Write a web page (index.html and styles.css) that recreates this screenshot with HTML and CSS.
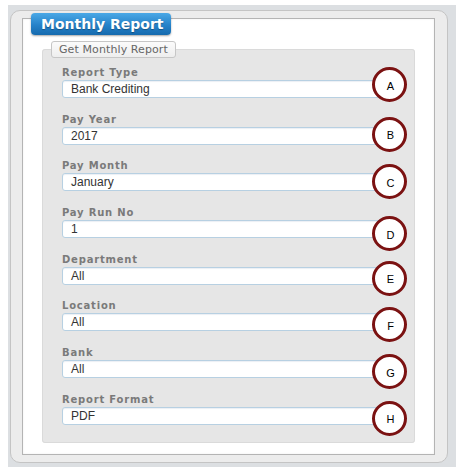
FILE: index.html
```html
<!DOCTYPE html>
<html>
<head>
<meta charset="utf-8">
<link rel="stylesheet" href="styles.css">
</head>
<body>
<div class="outer">
  <div class="frame">
    <div class="tab">Monthly Report</div>
    <div class="panel">
      <fieldset class="group">
        <legend class="legend">Get Monthly Report</legend>
        <div class="fields">
          <div class="row">
            <div class="label">Report Type</div>
            <div class="input">Bank Crediting</div>
            <div class="mark mk-a">A</div>
          </div>
          <div class="row">
            <div class="label">Pay Year</div>
            <div class="input">2017</div>
            <div class="mark mk-b">B</div>
          </div>
          <div class="row">
            <div class="label">Pay Month</div>
            <div class="input">January</div>
            <div class="mark mk-c">C</div>
          </div>
          <div class="row">
            <div class="label">Pay Run No</div>
            <div class="input">1</div>
            <div class="mark mk-d">D</div>
          </div>
          <div class="row">
            <div class="label">Department</div>
            <div class="input">All</div>
            <div class="mark mk-e">E</div>
          </div>
          <div class="row">
            <div class="label">Location</div>
            <div class="input">All</div>
            <div class="mark mk-e">F</div>
          </div>
          <div class="row">
            <div class="label">Bank</div>
            <div class="input">All</div>
            <div class="mark mk-e">G</div>
          </div>
          <div class="row">
            <div class="label">Report Format</div>
            <div class="input">PDF</div>
            <div class="mark mk-e">H</div>
          </div>
        </div>
      </fieldset>
    </div>
  </div>
</div>
</body>
</html>
```
FILE: styles.css
```css
html, body {
  margin: 0;
  padding: 0;
  background: #ffffff;
}
.outer {
  margin: 5px 0 0 8px;
  width: 448px;
  height: 462px;
  box-sizing: border-box;
  padding: 5px 8px 4px 2px;
  background: #dcdfe2;
}
.frame {
  position: relative;
  width: 438px;
  height: 453px;
  box-sizing: border-box;
  background: #ececec;
  border: 1px solid #c4c4c4;
  border-radius: 10px;
  padding: 7px 12px 7px 11px;
}
.tab {
  position: absolute;
  left: 20px;
  top: 2px;
  width: 140px;
  height: 22px;
  box-sizing: border-box;
  padding-left: 10px;
  border-radius: 4px;
  background: linear-gradient(#4aa8e6, #2682c9 55%, #156aae);
  box-shadow: 0 1px 2px rgba(0,0,0,0.35);
  color: #ffffff;
  font-family: "DejaVu Sans", Verdana, sans-serif;
  font-weight: bold;
  font-size: 14px;
  line-height: 22px;
  text-shadow: 0 1px 1px rgba(0,0,0,0.3);
  z-index: 2;
}
.panel {
  height: 437px;
  box-sizing: border-box;
  background: #ffffff;
  border: 1px solid #b4b4b4;
  box-shadow: inset 0 0 2px rgba(0,0,0,0.08);
  padding: 22px 0 0 19px;
}
.group {
  margin: 0;
  padding: 0;
  width: 373px;
  box-sizing: border-box;
  background: #e6e6e6;
  border: 1px solid #dadada;
  border-radius: 3px;
  min-inline-size: 0;
}
.legend {
  margin-left: 8px;
  padding: 0 7px;
  height: 17px;
  box-sizing: border-box;
  border: 1px solid #c6c6c6;
  border-radius: 3px;
  background: linear-gradient(#fbfbfb, #eeeeee);
  color: #666666;
  font-family: "DejaVu Sans", Verdana, sans-serif;
  font-size: 11px;
  letter-spacing: 0.1px;
  line-height: 15px;
}
.fields {
  padding: 9px 0 17px 19px;
  display: flex;
  flex-direction: column;
  gap: 15.7px;
}
.row {
  position: relative;
  display: flex;
  flex-direction: column;
  gap: 1px;
}
.label {
  height: 12px;
  font-family: "DejaVu Sans", Verdana, sans-serif;
  font-weight: bold;
  font-size: 10px;
  letter-spacing: 0.8px;
  line-height: 12px;
  color: #7a7a7a;
}
.input {
  width: 320px;
  height: 18px;
  box-sizing: border-box;
  background: #ffffff;
  border: 1px solid #b7d0e2;
  border-radius: 3px;
  box-shadow: inset 0 1px 1px rgba(120,150,180,0.15);
  padding-left: 8px;
  font-family: "Liberation Sans", Arial, sans-serif;
  font-size: 12px;
  line-height: 16px;
  color: #333333;
}
.mark {
  position: absolute;
  left: 310px;
  width: 35px;
  height: 35px;
  box-sizing: border-box;
  border: 3px solid #7b1212;
  border-radius: 50%;
  background: #ffffff;
  display: flex;
  align-items: center;
  justify-content: center;
  padding-top: 2px;
  padding-left: 2px;
  font-family: "Liberation Sans", Arial, sans-serif;
  font-size: 11px;
  color: #000000;
}
.mk-a { top: 0; }
.mk-b { top: 3px; }
.mk-c { top: 4px; }
.mk-d { top: 9px; }
.mk-e { top: 7px; }
```
